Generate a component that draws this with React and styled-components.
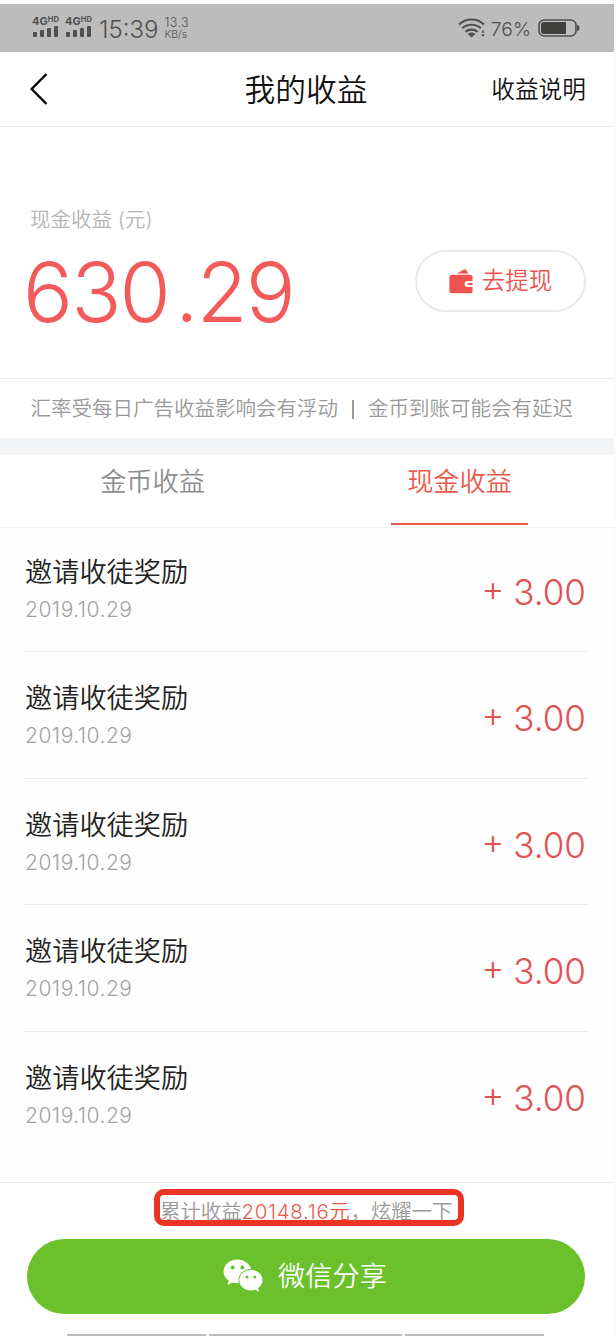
import React from 'react';
import styled, { createGlobalStyle } from 'styled-components';

const GlobalStyle = createGlobalStyle`
  * { box-sizing: border-box; }
  body {
    margin: 0;
    background: #fefefe;
    font-family: Inter, 'Noto Sans CJK SC', sans-serif;
    font-weight: 350;
  }
`;

const Screen = styled.div`
  width: 616px;
  height: 1336px;
  overflow: hidden;
  display: flex;
  flex-direction: column;
  padding: 4px 2px 0 0;
  background: #fcfcfc;
`;

const Label = styled.span`
  display: block;
  white-space: nowrap;
  font-size: ${(p) => p.$size}px;
  line-height: ${(p) => p.$line || 30}px;
  letter-spacing: ${(p) => p.$track || 0}px;
  color: ${(p) => p.$color || '#111'};
  font-weight: 350;
`;

const StatusBar = styled.div`
  flex: none;
  height: 48px;
  display: flex;
  align-items: center;
  background: #bcbcbc;
  padding: 0 34px 0 32px;
  svg { display: block; flex: none; }
`;

const Signal = styled.div`
  width: 27px;
  height: 24px;
  margin-right: 6px;
`;

const Network = styled.div`
  display: flex;
  line-height: 10px;
  height: 10px;
  font-size: 11px;
  font-weight: 700;
  color: #50514f;
  sup { font-size: 7.5px; line-height: 7px; letter-spacing: 0.2px; }
`;

const Bars = styled.div`
  display: flex;
  align-items: flex-end;
  gap: 3px;
  height: 11px;
  padding-left: 1px;
`;

const Bar = styled.i`
  width: 4px;
  height: ${(p) => p.$h}px;
  border-radius: 1px;
  background: #50514f;
`;

const Clock = styled.div`
  padding: 3px 0 0 1px;
`;

const Speed = styled.div`
  margin-left: 6px;
  margin-right: auto;
`;

const BatteryLevel = styled.div`
  margin: 1px 7px 0 5px;
`;

const Header = styled.header`
  flex: none;
  height: 75px;
  display: grid;
  grid-template-columns: 1fr auto 1fr;
  align-items: center;
  padding: 0 28px 0 30px;
  background: #fff;
  border-bottom: 1px solid #ededed;
`;

const HeaderTitle = styled.h1`
  margin: 2px 4px 0 0;
`;

const HeaderLink = styled.div`
  justify-self: end;
  padding-top: 1px;
`;

const Summary = styled.section`
  flex: none;
  height: 252px;
  display: flex;
  justify-content: space-between;
  padding: 78px 28px 0 23px;
  background: #fff;
  border-bottom: 1px solid #ededed;
`;

const Caption = styled.div`
  padding: 0 0 14px 7px;
`;

const Point = styled.span`
  margin: 0 0 0 6px;
`;

const Withdraw = styled.button`
  width: 171px;
  height: 62px;
  margin-top: 45px;
  padding: 0;
  display: flex;
  align-items: center;
  justify-content: center;
  gap: 9px;
  border: 2px solid #e9e9e9;
  border-radius: 31px;
  background: #fff;
  font-family: inherit;
  svg { margin-top: 1px; }
`;

const Notice = styled.div`
  flex: none;
  height: 59px;
  display: flex;
  align-items: center;
  padding-left: 30.5px;
  background: #fff;
`;

const Divider = styled.span`
  width: 1.5px;
  height: 19px;
  margin: 1px 14.5px 0 14px;
  background: #999;
`;

const Tabs = styled.nav`
  flex: none;
  height: 90px;
  display: flex;
  border-top: 17px solid #f3f4f6;
  border-bottom: 1px solid #f3f3f3;
  background: #fff;
`;

const Tab = styled.div`
  width: 50%;
  display: flex;
  flex-direction: column;
  justify-content: space-between;
  align-items: center;
  padding: 12px 2px 2px 0;
`;

const Underline = styled.i`
  width: 137px;
  height: 2px;
  background: ${(p) => (p.$active ? '#e85b4b' : 'transparent')};
`;

const List = styled.main`
  flex: none;
  height: 654px;
  padding: 0 26px 0 24px;
  background: #fefefe;
`;

const Row = styled.div`
  height: 126.6px;
  display: flex;
  justify-content: space-between;
  padding: 29px 2px 0 1px;
  border-bottom: ${(p) => (p.$last ? 'none' : '1px solid #ebebeb')};
  &:first-child { height: 124px; padding-top: 27px; }
`;

const Amount = styled.div`
  display: flex;
  align-items: center;
  gap: 9px;
  height: 42px;
  margin-top: 16px;
`;

const Plus = styled.div`
  height: 50px;
`;

const Footer = styled.footer`
  flex: none;
  height: 155px;
  display: flex;
  flex-direction: column;
  align-items: center;
  background: #fff;
  border-top: 1px solid #e9e9e9;
`;

const Total = styled.div`
  width: 310px;
  height: 37px;
  margin: 6px 0 13px 4px;
  display: flex;
  padding: 2px 0 0 0;
  border: 6px solid #ea3323;
  border-radius: 10px;
`;

const Share = styled.button`
  width: 558px;
  height: 75px;
  margin-left: -2px;
  padding: 0 2px 2px 0;
  display: flex;
  justify-content: center;
  align-items: center;
  gap: 14px;
  border: 0;
  border-radius: 38px;
  background: #6bc12b;
  font-family: inherit;
`;

const ShareLabel = styled.div`
  padding-top: 3px;
`;

const BottomEdge = styled.div`
  display: flex;
  gap: 3px;
  margin-top: 20px;
  margin-left: -3px;
`;

const Segment = styled.i`
  width: ${(p) => p.$w}px;
  height: 2px;
  background: #bcbcbc;
`;

const SignalBlock = () => (
  <Signal>
    <Network>4G<sup>HD</sup></Network>
    <Bars><Bar $h={5} /><Bar $h={7} /><Bar $h={9} /><Bar $h={11} /></Bars>
  </Signal>
);

const WifiIcon = () => (
  <svg width="28" height="20" viewBox="0 0 28 20" fill="none" stroke="#50514f" strokeWidth="2.200">
    <path d="M1 6.500C8-.2 19-.2 26 6.500M4.200 10.200c5.200-4.600 13.400-4.600 18.600 0M7.500 13.800c3.300-2.900 8.700-2.900 12 0" />
    <path d="M9.700 16c2.200-2 5.400-2 7.600 0L13.500 19.500z" fill="#50514f" stroke="none" />
    <path d="M25 12l1.700 2.700h-3.400zM25 19l1.700-2.700h-3.400z" fill="#50514f" stroke="none" />
  </svg>
);

const BatteryIcon = () => (
  <svg width="42" height="18" viewBox="0 0 42 18">
    <rect x="1" y="1" width="37" height="16" rx="5" fill="none" stroke="#50514f" strokeWidth="1.600" />
    <path d="M6 3h22v12H6a3 3 0 0 1-3-3V6a3 3 0 0 1 3-3z" fill="#41423f" />
    <path d="M39 6q2.500 0 2.500 3T39 12z" fill="#50514f" />
  </svg>
);

const BackIcon = () => (
  <svg width="18" height="32" viewBox="0 0 18 32" fill="none" stroke="#000" strokeWidth="2.400">
    <path d="M16.500 1L1.700 16l14.800 15" />
  </svg>
);

const WalletIcon = () => (
  <svg width="24" height="25" viewBox="0 0 24 25" fill="#ee5350">
    <path d="M8 4.500L14.500.700Q16-.200 17 .800L19.500 4.500z" />
    <path d="M3 5.700h18a2.600 2.600 0 0 1 2.600 2.600V12h-5a3 3 0 0 0 0 6h5v3.700a2.600 2.600 0 0 1-2.600 2.600H3A2.600 2.600 0 0 1 .400 21.700V8.300A2.600 2.600 0 0 1 3 5.700z" />
    <path d="M19.500 14h4v2h-4a1 1 0 0 1 0-2z" />
  </svg>
);

const WechatIcon = () => (
  <svg width="41" height="33" viewBox="0 0 41 33">
    <path d="M14.500.500C6.700.500.500 5.800.500 12.600c0 3.800 2 7 5.200 9.200L4.400 26l4.900-2.500c1.700.500 3.400.800 5.200.800 7.800 0 14-5.300 14-11.700S22.300.500 14.500.500z" fill="#fff" />
    <ellipse cx="28" cy="21.300" rx="12.600" ry="11.400" fill="#6bc12b" />
    <path d="M28 11C21.400 11 16.300 15.500 16.300 21.200S21.400 31.400 28 31.400c1.500 0 2.900-.300 4.200-.700l3.900 2-1.100-3.500c2.700-1.900 4.500-4.700 4.500-8C39.500 15.500 34.500 11 28 11z" fill="#fff" />
    <g fill="#6bc12b">
      <circle cx="9.700" cy="8.500" r="1.900" /><circle cx="19.300" cy="8.500" r="1.900" />
      <circle cx="24" cy="18" r="1.600" /><circle cx="31.800" cy="18" r="1.600" />
    </g>
  </svg>
);

const entries = Array.from({ length: 5 }, (_, id) => ({
  id, title: '邀请收徒奖励', date: '2019.10.29', amount: '3.00',
}));

export default function App() {
  return (
    <Screen>
      <GlobalStyle />
      <StatusBar>
        <SignalBlock />
        <SignalBlock />
        <Clock><Label $size={24} $color="#50514f">15:39</Label></Clock>
        <Speed>
          <Label $size={12.500} $line={12} $color="#50514f" $track={0.4}>13.3</Label>
          <Label $size={10.500} $line={11} $color="#50514f">KB/s</Label>
        </Speed>
        <WifiIcon />
        <BatteryLevel><Label $size={19.300} $color="#50514f">76%</Label></BatteryLevel>
        <BatteryIcon />
      </StatusBar>
      <Header>
        <BackIcon />
        <HeaderTitle><Label $size={30.700} $line={40}>我的收益</Label></HeaderTitle>
        <HeaderLink><Label $size={23.700}>收益说明</Label></HeaderLink>
      </Header>
      <Summary>
        <div>
          <Caption><Label $size={20.500} $color="#b5b5b5">现金收益 (元)</Label></Caption>
          <Label $size={83} $line={86} $color="#f35b5b" $track={-1.800}>630<Point>.</Point>29</Label>
        </div>
        <Withdraw>
          <WalletIcon />
          <Label $size={23.500} $color="#ee5350">去提现</Label>
        </Withdraw>
      </Summary>
      <Notice>
        <Label $size={20.500} $color="#999">汇率受每日广告收益影响会有浮动</Label>
        <Divider />
        <Label $size={20.500} $color="#999">金币到账可能会有延迟</Label>
      </Notice>
      <Tabs>
        <Tab><Label $size={26.200} $color="#8e8e8e">金币收益</Label><Underline /></Tab>
        <Tab><Label $size={26.200} $color="#e85b4b">现金收益</Label><Underline $active /></Tab>
      </Tabs>
      <List>
        {entries.map((e) => (
          <Row key={e.id} $last={e.id === 4}>
            <div>
              <Label $size={27.200} $line={35} $color="#222">{e.title}</Label>
              <Label $size={21} $line={39} $color="#a3a3a3" $track={0.5}>{e.date}</Label>
            </div>
            <Amount>
              <Plus><Label $size={35} $line={42} $color="#df5353">+</Label></Plus>
              <Label $size={35} $line={42} $color="#df5353">{e.amount}</Label>
            </Amount>
          </Row>
        ))}
      </List>
      <Footer>
        <Total>
          <Label $size={20.400} $color="#999">累计收益</Label>
          <Label $size={20.400} $color="#e85b4b" $track={0.7}>20148.16元</Label>
          <Label $size={20.400} $color="#999">，炫耀一下</Label>
        </Total>
        <Share>
          <WechatIcon />
          <ShareLabel><Label $size={27.200} $line={36} $color="#fff">微信分享</Label></ShareLabel>
        </Share>
        <BottomEdge><Segment $w={139} /><Segment $w={193} /><Segment $w={139} /></BottomEdge>
      </Footer>
    </Screen>
  );
}
